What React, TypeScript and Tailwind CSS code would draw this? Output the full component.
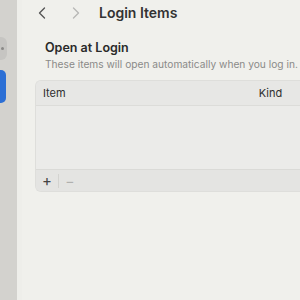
import { ChevronLeft, ChevronRight } from "lucide-react";

export default function App() {
  return (
    <div
      className="flex h-[300px] w-[300px] overflow-hidden bg-[#f0f0ec] text-[#2a2a2a]"
      style={{ fontFamily: "Inter, 'Noto Sans', sans-serif" }}
    >
      {/* sidebar sliver */}
      <div className="flex w-[17px] shrink-0 flex-col bg-[#d3d2ce] pt-[37px]">
        <div className="flex h-[23px] w-[7px] items-center rounded-r-[6px] bg-[#c6c5c2]">
          <span className="ml-[1px] h-[3px] w-[3px] rounded-full bg-[#8a8987]" />
        </div>
        <div className="mt-[10px] h-[33px] w-[6px] rounded-r-[5px] bg-[#2c6fd5]" />
      </div>
      <div className="w-[5px] shrink-0 bg-[#eeeeea]" />

      {/* main */}
      <div className="flex min-w-0 flex-1 flex-col">
        <div className="flex h-[25px] items-center pl-[10px]">
          <ChevronLeft className="h-[20px] w-[20px] text-[#555]" strokeWidth={1.6} />
          <ChevronRight className="ml-[14px] h-[20px] w-[20px] text-[#b8b8b6]" strokeWidth={1.6} />
          <span className="ml-[13px] whitespace-nowrap text-[14px] font-semibold text-[#333]">
            Login Items
          </span>
        </div>

        <div className="pl-[23px] pt-[15px]">
          <div className="whitespace-nowrap text-[12.5px] font-semibold leading-[16px] text-[#2a2a2a]">
            Open at Login
          </div>
          <div className="mt-[1px] whitespace-nowrap text-[10.2px] leading-[14px] text-[#8a8a88]">
            These items will open automatically when you log in.
          </div>
        </div>

        <div className="ml-[13px] mt-[9px] w-[300px] overflow-hidden rounded-l-[6px] border border-r-0 border-[#dededb] bg-[#ebebe9]">
          <div className="flex h-[25px] items-center border-b border-[#dcdcd9] bg-[#e7e7e5] text-[11px] text-[#2f2f2f]">
            <span className="pl-[7px]">Item</span>
            <span className="ml-[193px]">Kind</span>
          </div>
          <div className="h-[63px]" />
          <div className="flex h-[22px] items-center border-t border-[#dadad7] bg-[#e4e4e2]">
            <span className="w-[22px] text-center text-[15px] leading-none text-[#444]">+</span>
            <span className="h-[14px] w-px bg-[#d3d3d0]" />
            <span className="w-[22px] text-center text-[14px] leading-none text-[#b0b0ae]">−</span>
          </div>
        </div>
      </div>
    </div>
  );
}
